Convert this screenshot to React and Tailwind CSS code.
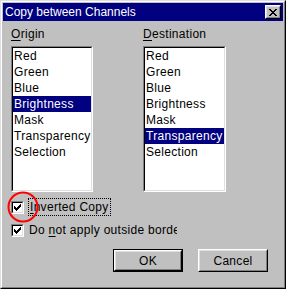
import React from 'react';

const origin = ['Red', 'Green', 'Blue', 'Brightness', 'Mask', 'Transparency', 'Selection'];
const destination = ['Red', 'Green', 'Blue', 'Brightness', 'Mask', 'Transparency', 'Selection'];

function ListBox({ items, selected, width }) {
  return (
    <div
      className={`${width} h-[146px] border border-t-[#808080] border-l-[#808080] border-r-white border-b-white`}
    >
      <div className="h-full bg-white border border-t-black border-l-black border-r-[#dfdfdf] border-b-[#dfdfdf] overflow-hidden">
        {items.map((item) => (
          <div
            key={item}
            className={`h-[16px] leading-[16px] pl-[1px] whitespace-nowrap ${
              item === selected ? 'bg-[#000080] text-white' : 'text-black'
            }`}
          >
            {item}
          </div>
        ))}
      </div>
    </div>
  );
}

function CheckBox() {
  return (
    <div className="w-[13px] h-[13px] shrink-0 border border-t-[#808080] border-l-[#808080] border-r-white border-b-white">
      <div className="w-full h-full bg-white border border-t-black border-l-black border-r-[#dfdfdf] border-b-[#dfdfdf] flex items-center justify-center">
        <svg width="7" height="7" viewBox="0 0 7 7" shapeRendering="crispEdges">
          <path d="M6 0h1v3h-1zM5 1h1v3h-1zM4 2h1v3h-1zM3 3h1v3h-1zM2 4h1v3h-1zM1 3h1v3h-1zM0 2h1v3h-1z" fill="#000" />
        </svg>
      </div>
    </div>
  );
}

function Button({ label, isDefault }) {
  const face = (
    <div className="h-full border border-t-white border-l-white border-r-black border-b-black">
      <div className="h-full border border-t-[#dfdfdf] border-l-[#dfdfdf] border-r-[#808080] border-b-[#808080] flex items-center justify-center text-black">
        {label}
      </div>
    </div>
  );
  return isDefault ? (
    <div className="w-[70px] h-[23px] border border-black">{face}</div>
  ) : (
    <div className="w-[70px] h-[23px]">{face}</div>
  );
}

export default function App() {
  return (
    <div
      className="w-[286px] h-[289px] bg-[#c0c0c0] border border-t-[#dfdfdf] border-l-[#dfdfdf] border-r-black border-b-black overflow-hidden text-[12px] leading-[14px]"
      style={{ fontFamily: '"Liberation Sans", Arial, sans-serif' }}
    >
      <div className="relative h-full border border-t-white border-l-white border-r-[#808080] border-b-[#808080] p-px">
        {/* Title bar */}
        <div className="h-[18px] bg-[#000080] flex items-center justify-between pl-[2px] pr-[2px]">
          <span className="text-white whitespace-nowrap">Copy between Channels</span>
          <div className="w-[16px] h-[14px] border border-t-white border-l-white border-r-black border-b-black">
            <div className="h-full bg-[#c0c0c0] border border-t-[#dfdfdf] border-l-[#dfdfdf] border-r-[#808080] border-b-[#808080] flex items-center justify-center">
              <svg width="8" height="7" viewBox="0 0 8 7" shapeRendering="crispEdges">
                <path
                  d="M0 0h2v1h-2zM6 0h2v1h-2zM1 1h2v1h-2zM5 1h2v1h-2zM2 2h4v1h-4zM3 3h2v1h-2zM2 4h4v1h-4zM1 5h2v1h-2zM5 5h2v1h-2zM0 6h2v1h-2zM6 6h2v1h-2z"
                  fill="#000"
                />
              </svg>
            </div>
          </div>
        </div>

        <div className="tracking-[0.3px]">
          {/* Channel lists */}
          <div className="flex pl-[8px] mt-[6px]">
            <div className="w-[132px]">
              <div className="text-black">
                <span className="underline underline-offset-2">O</span>rigin
              </div>
              <div className="mt-[5px]">
                <ListBox items={origin} selected="Brightness" width="w-[82px]" />
              </div>
            </div>
            <div>
              <div className="text-black">
                <span className="underline underline-offset-2">D</span>estination
              </div>
              <div className="mt-[5px]">
                <ListBox items={destination} selected="Transparency" width="w-[83px]" />
              </div>
            </div>
          </div>

          {/* Options */}
          <div className="pl-[8px] mt-[6px] flex flex-col gap-[6px]">
            <div className="flex items-center gap-[4px] h-[18px]">
              <CheckBox />
              <div className="h-[18px] px-[1px] flex items-center border border-dotted border-black text-black whitespace-nowrap">
                <span className="underline underline-offset-2">I</span>nverted Copy
              </div>
            </div>
            <div className="flex items-center gap-[5px] h-[16px]">
              <CheckBox />
              {/* label is clipped by the control width, as in the original dialog */}
              <div className="w-[148px] overflow-hidden whitespace-nowrap text-black">
                Do <span className="underline underline-offset-2">n</span>ot apply outside border
              </div>
            </div>
          </div>

          {/* Buttons */}
          <div className="flex justify-end gap-[15px] pr-[15px] mt-[11px]">
            <Button label="OK" isDefault />
            <Button label="Cancel" />
          </div>
        </div>

        {/* Red annotation circle */}
        <svg className="absolute left-[4px] top-[188px]" width="34" height="34" viewBox="0 0 34 34">
          <circle cx="17" cy="17" r="14.5" fill="none" stroke="#f00" strokeWidth="2" />
        </svg>
      </div>
    </div>
  );
}
